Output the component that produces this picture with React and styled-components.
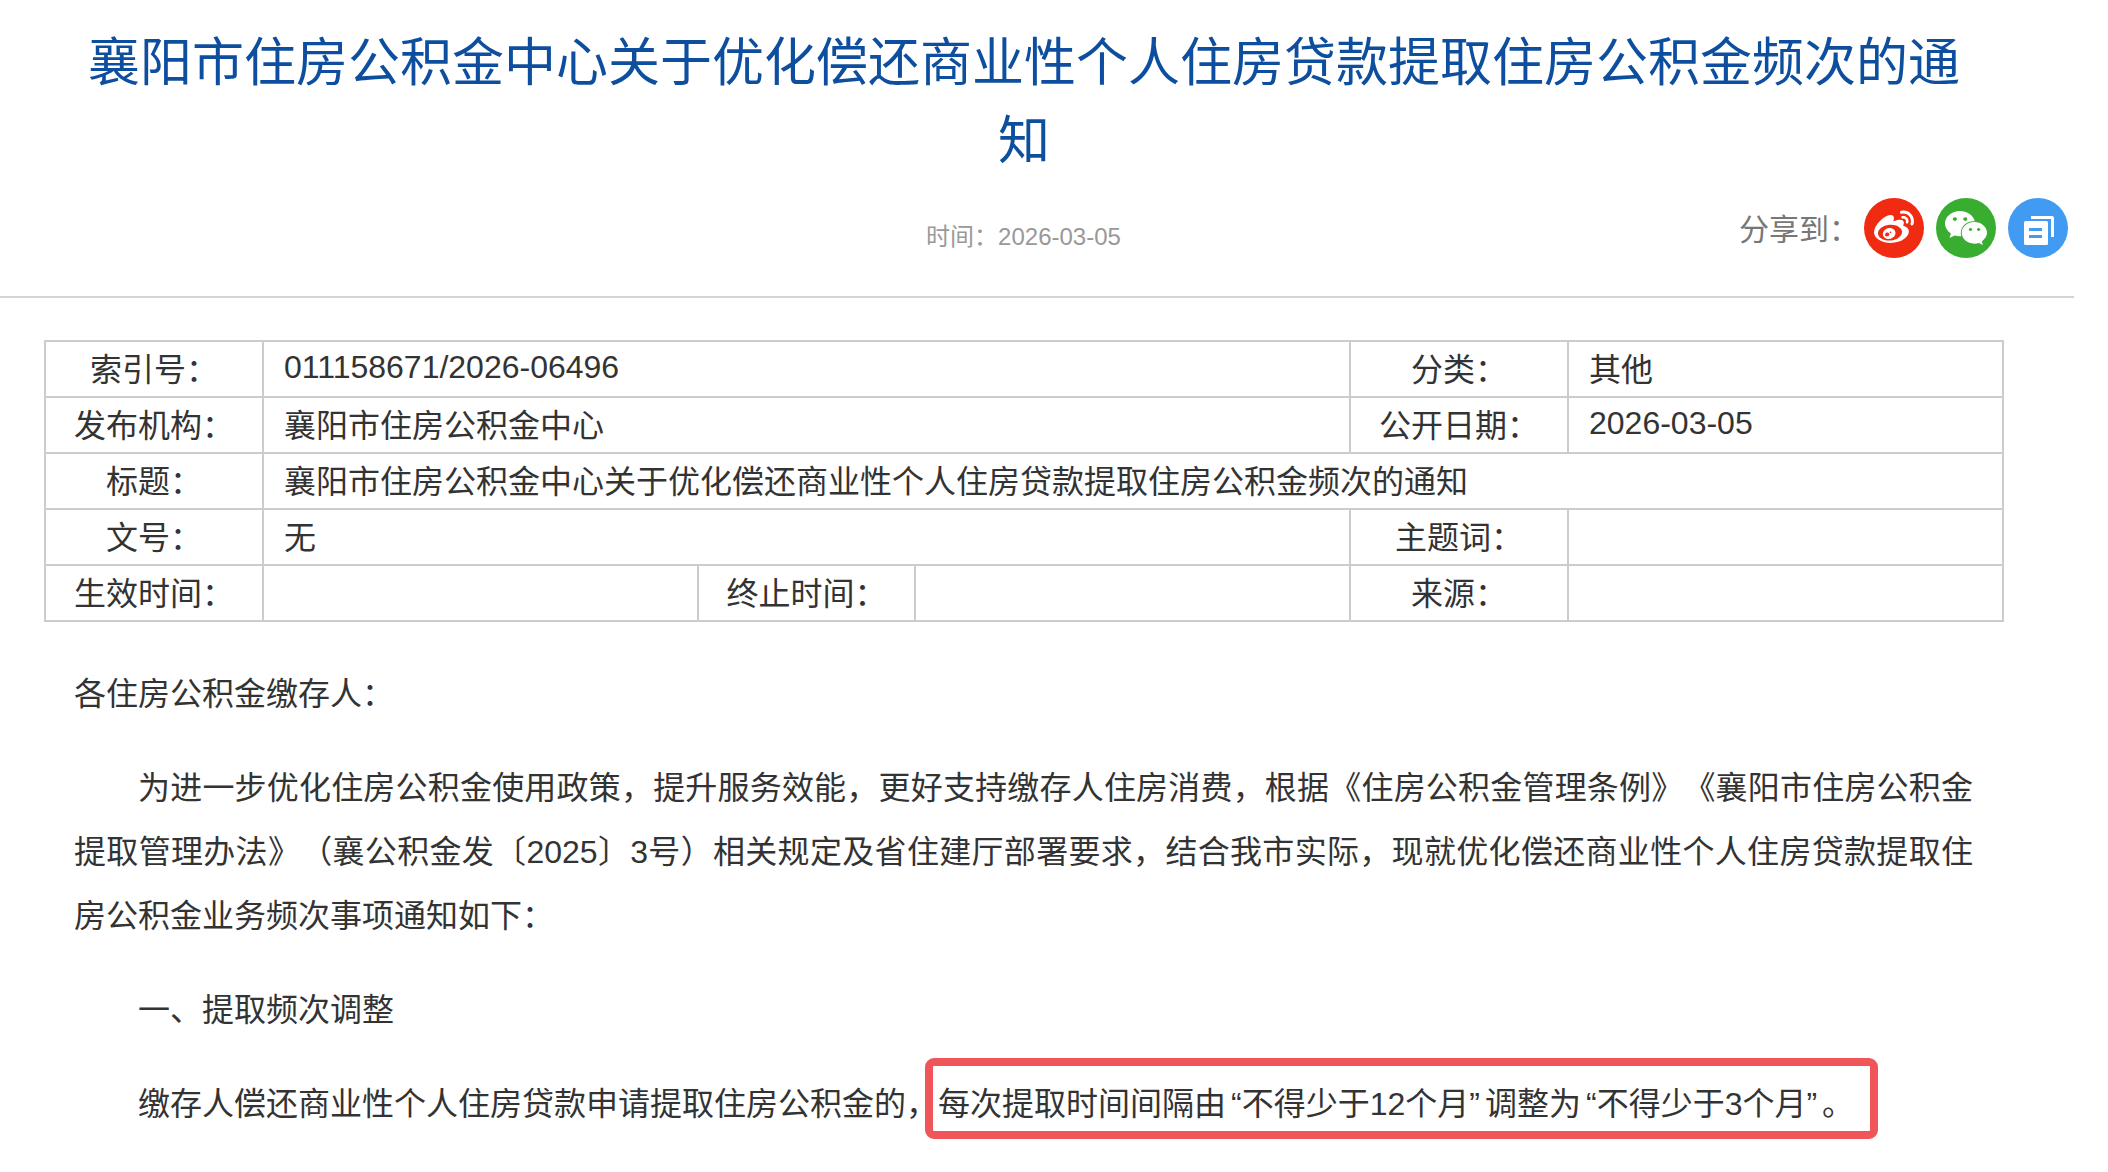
import React from "react";
import styled, { createGlobalStyle } from "styled-components";
import { FaWeibo, FaWeixin } from "react-icons/fa";

const Global = createGlobalStyle`
  html, body { margin: 0; padding: 0; background: #fff; }
  body { font-family: "Liberation Sans", "Noto Sans CJK SC", sans-serif; color: #333; overflow: hidden; }
`;

const Page = styled.div`
  width: 2108px;
  height: 1172px;
  overflow: hidden;
`;

const Header = styled.header`
  width: 2074px;
  height: 298px;
  box-sizing: border-box;
  border-bottom: 2px solid #d4d4d4;
  padding-top: 24px;
`;

const Title = styled.h1`
  width: 1900px;
  margin: 0 0 0 74px;
  font-size: 52px;
  line-height: 78px;
  font-weight: 400;
  text-align: center;
  color: #0d4f9e;
`;

const MetaRow = styled.div`
  width: 2047px;
  margin-top: 18px;
  display: grid;
  grid-template-columns: 1fr auto 1fr;
  align-items: center;
`;

const Time = styled.div`
  grid-column: 2;
  font-size: 24px;
  color: #999;
  padding-top: 12px;
`;

const Share = styled.div`
  grid-column: 3;
  justify-self: end;
  margin-right: -21px;
  display: flex;
  align-items: center;
  gap: 12px;
`;

const ShareLabel = styled.span`
  font-size: 30px;
  color: #777;
  margin-right: -7px;
  padding-bottom: 2px;
`;

const Circle = styled.span`
  width: 60px;
  height: 60px;
  border-radius: 50%;
  background: ${(p) => p.$bg};
  color: #fff;
  display: flex;
  align-items: center;
  justify-content: center;
  font-size: ${(p) => p.$size || 40}px;
`;

const InfoTable = styled.table`
  margin: 42px 0 0 44px;
  width: 1958px;
  border-collapse: collapse;
  table-layout: fixed;
  font-size: 32px;
`;

const Label = styled.td`
  height: 56px;
  box-sizing: border-box;
  padding: 0 0 4px;
  border: 2px solid #ccc;
  text-align: center;
  color: #333;
`;

const Value = styled(Label)`
  text-align: left;
  padding-left: 20px;
`;

const Article = styled.article`
  padding: 40px 0 0 74px;
  width: 1899px;
  font-size: 32px;
  line-height: 64px;
  color: #333;
  text-align: justify;
  text-spacing-trim: space-all;
`;

const Para = styled.p`
  margin: 0 0 30px;
  text-indent: ${(p) => (p.$indent ? "2em" : "0")};
`;

const Highlight = styled.span`
  display: inline-block;
  text-indent: 0;
  margin: -11px -30px 0 -5px;
  padding: 11px 16px 0 5px;
  line-height: 54px;
  white-space: nowrap;
  outline: 8.5px solid #f0555a;
  border-radius: 1px;
`;

const Quote = styled.span`
  margin: ${(p) => (p.$open ? "0 0 0 5px" : "0 5px 0 0")};
`;

const DocIcon = () => (
  <svg width="60" height="60" viewBox="0 0 60 60">
    <path d="M23 18h21a2 2 0 0 1 2 2v19h-3V21H23z" fill="#fff" />
    <rect x="16" y="23" width="24" height="24" rx="1.5" fill="#fff" />
    <rect x="21" y="30" width="13" height="3" fill="#419bf3" />
    <rect x="21" y="37" width="13" height="3" fill="#419bf3" />
  </svg>
);

const cols = [218, 435, 217, 435, 218, 435];

export default function App() {
  return (
    <Page>
      <Global />
      <Header>
        <Title>襄阳市住房公积金中心关于优化偿还商业性个人住房贷款提取住房公积金频次的通知</Title>
        <MetaRow>
          <Time>时间：2026-03-05</Time>
          <Share>
            <ShareLabel>分享到：</ShareLabel>
            <Circle $bg="#f12a12"><FaWeibo /></Circle>
            <Circle $bg="#38ad2f" $size={44}><FaWeixin /></Circle>
            <Circle $bg="#419bf3"><DocIcon /></Circle>
          </Share>
        </MetaRow>
      </Header>

      <InfoTable>
        <colgroup>
          {cols.map((w, i) => <col key={i} style={{ width: w }} />)}
        </colgroup>
        <tbody>
          <tr>
            <Label>索引号：</Label>
            <Value colSpan={3}>011158671/2026-06496</Value>
            <Label>分类：</Label>
            <Value>其他</Value>
          </tr>
          <tr>
            <Label>发布机构：</Label>
            <Value colSpan={3}>襄阳市住房公积金中心</Value>
            <Label>公开日期：</Label>
            <Value>2026-03-05</Value>
          </tr>
          <tr>
            <Label>标题：</Label>
            <Value colSpan={5}>襄阳市住房公积金中心关于优化偿还商业性个人住房贷款提取住房公积金频次的通知</Value>
          </tr>
          <tr>
            <Label>文号：</Label>
            <Value colSpan={3}>无</Value>
            <Label>主题词：</Label>
            <Value />
          </tr>
          <tr>
            <Label>生效时间：</Label>
            <Value />
            <Label>终止时间：</Label>
            <Value />
            <Label>来源：</Label>
            <Value />
          </tr>
        </tbody>
      </InfoTable>

      <Article>
        <Para>各住房公积金缴存人：</Para>
        <Para $indent>为进一步优化住房公积金使用政策，提升服务效能，更好支持缴存人住房消费，根据《住房公积金管理条例》《襄阳市住房公积金提取管理办法》（襄公积金发〔2025〕3号）相关规定及省住建厅部署要求，结合我市实际，现就优化偿还商业性个人住房贷款提取住房公积金业务频次事项通知如下：</Para>
        <Para $indent>一、提取频次调整</Para>
        <Para $indent>缴存人偿还商业性个人住房贷款申请提取住房公积金的，<Highlight>每次提取时间间隔由<Quote $open>“</Quote>不得少于12个月<Quote>”</Quote>调整为<Quote $open>“</Quote>不得少于3个月<Quote>”</Quote>。</Highlight></Para>
      </Article>
    </Page>
  );
}
